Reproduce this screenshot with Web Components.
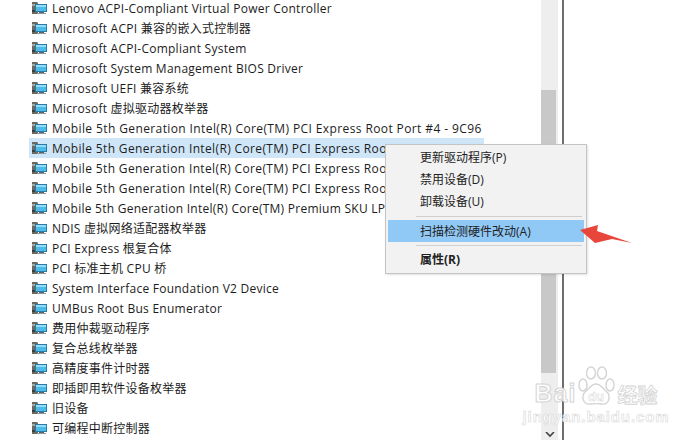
<!DOCTYPE html>
<html><head><meta charset="utf-8">
<style>
html,body{margin:0;padding:0;background:#fff;overflow:hidden}
body{width:696px;height:440px;font-family:"Open Sans","Noto Sans CJK SC",sans-serif;font-size:12px;color:#1c1c1c}
</style></head><body>
<template id="t-row"><style>
:host{display:flex;align-items:center;height:20px;padding-left:31px;gap:5px;white-space:nowrap}
:host([selected]){background:linear-gradient(#cfe6f8,#cfe6f8) no-repeat 29px 0/455px 20px}
svg{flex:none;width:16px;height:14px}
span{letter-spacing:.25px}
:host([wide]) span{letter-spacing:.39px}
:host([cut]) span{letter-spacing:.36px;max-width:333px;overflow:hidden}
:host([tight]) span{letter-spacing:.26px}
</style>
<svg viewBox="0 0 16 14"><path d="M1 1h5l1 1v11H1z" fill="#6b6a62"/><path d="M1 3h3v2H1z" fill="#a9a79b"/><path d="M1 9h3v2H1z" fill="#3e3d38"/><rect x="4" y="3" width="12" height="8" fill="#2a7ca6"/><rect x="5" y="4" width="10" height="6" fill="#4dbcea"/><path d="M5 4h10v2H5z" fill="#93dcf5"/><rect x="8" y="11" width="5" height="1" fill="#55646c"/><rect x="6" y="12" width="9" height="1" fill="#8d9aa0"/></svg><span><slot></slot></span></template>

<template id="t-list"><style>
:host{display:block;width:541px;margin-top:-2px;flex:none}
</style><slot></slot></template>

<template id="t-scroll"><style>
:host{display:flex;flex:none;width:23px;height:440px}
.track{width:17px;background:#eeeeee;display:flex;flex-direction:column;padding-top:90px;box-sizing:border-box}
.thumb{height:283px;width:15px;background:#c8c8c8}
.sp{flex:1}
.ar{height:8px;display:flex;justify-content:center}
.gap{width:4px;background:#fff}
.line{width:2px;background:#6e6e6e}
</style><div class="track"><div class="thumb"></div><div class="sp"></div><div class="ar"><svg width="10" height="6" viewBox="0 0 10 6"><path d="M1 0l4 4 4-4" fill="none" stroke="#444" stroke-width="1.6"/></svg></div></div><div class="gap"></div><div class="line"></div></template>

<template id="t-menu"><style>
:host{position:absolute;left:385px;top:144px;width:202px;height:130px;box-sizing:border-box;background:#f2f2f2;border:1px solid #c4c4c4;box-shadow:1px 1px 2px rgba(0,0,0,.12);padding:1px 2px;font-size:12px;color:#222;display:flex;flex-direction:column}
</style><slot></slot></template>

<template id="t-item"><style>
:host{display:flex;align-items:center;height:22px;padding-left:32px;white-space:nowrap}
:host([active]){background:#90c8f6}
:host([strong]){font-weight:700}
</style><slot></slot></template>

<template id="t-sep"><style>
:host{display:block;height:1px;margin:4px 2px 3px 28px;background:#cfcfcf}
:host([low]){margin:3px 2px 2px 28px}
</style></template>

<template id="t-arrow"><style>
:host{position:absolute;left:578px;top:224px;width:56px;height:22px;display:block}
</style><svg width="56" height="22" viewBox="0 0 56 22"><path d="M2 6L20 1l-1 6L54 19 34 15l-17 4z" fill="#e8463a"/></svg></template>

<template id="t-mark"><style>
:host{position:absolute;left:532px;top:364px;width:128px;height:62px;display:block;font-family:"Liberation Sans",sans-serif;pointer-events:none}
.c{display:flex;flex-direction:column;align-items:center}
.top{display:flex;align-items:flex-end;height:43px;white-space:nowrap}
.b{font-size:25px;font-weight:700;letter-spacing:1px;-webkit-text-stroke:1px #d4d4d4;color:rgba(255,255,255,.85);line-height:27px}
.paw{width:38px;height:41px;margin:0 1px;flex:none}
.cn{font:700 20px/25px "Noto Sans CJK SC",sans-serif;-webkit-text-stroke:.8px #d4d4d4;color:rgba(255,255,255,.85);margin-left:1px}
.u{font-size:15px;letter-spacing:.9px;font-weight:700;-webkit-text-stroke:.6px #d8d8d8;color:rgba(255,255,255,.85);line-height:16px;margin-top:2px;white-space:nowrap}
</style><div class="c"><div class="top"><span class="b">Bai</span><svg class="paw" viewBox="0 0 38 41" fill="rgba(255,255,255,.85)" stroke="#d4d4d4" stroke-width="1.4"><ellipse cx="6" cy="19" rx="4" ry="6"/><ellipse cx="14" cy="7" rx="4.5" ry="6"/><ellipse cx="25" cy="7" rx="4.5" ry="6"/><ellipse cx="33" cy="19" rx="4" ry="6"/><path d="M19 18c5 0 7 5 11 8 4 4 2 13-5 12-4-.5-8-.5-12 0-7 1-9-8-5-12 4-3 6-8 11-8z"/><text x="19" y="35" text-anchor="middle" font-size="13" font-weight="700" font-family="Liberation Sans" stroke-width=".5">du</text></svg><span class="cn">经验</span></div><div class="u">jingyan.baidu.com</div></div></template>

<dm-page>
<dm-list>
<dm-row>Lenovo ACPI-Compliant Virtual Power Controller</dm-row>
<dm-row>Microsoft ACPI 兼容的嵌入式控制器</dm-row>
<dm-row>Microsoft ACPI-Compliant System</dm-row>
<dm-row>Microsoft System Management BIOS Driver</dm-row>
<dm-row>Microsoft UEFI 兼容系统</dm-row>
<dm-row>Microsoft 虚拟驱动器枚举器</dm-row>
<dm-row wide>Mobile 5th Generation Intel(R) Core(TM) PCI Express Root Port #4 - 9C96</dm-row>
<dm-row selected cut>Mobile 5th Generation Intel(R) Core(TM) PCI Express Roo</dm-row>
<dm-row cut>Mobile 5th Generation Intel(R) Core(TM) PCI Express Roo</dm-row>
<dm-row cut>Mobile 5th Generation Intel(R) Core(TM) PCI Express Roo</dm-row>
<dm-row cut tight>Mobile 5th Generation Intel(R) Core(TM) Premium SKU LP</dm-row>
<dm-row>NDIS 虚拟网络适配器枚举器</dm-row>
<dm-row>PCI Express 根复合体</dm-row>
<dm-row>PCI 标准主机 CPU 桥</dm-row>
<dm-row>System Interface Foundation V2 Device</dm-row>
<dm-row>UMBus Root Bus Enumerator</dm-row>
<dm-row>费用仲裁驱动程序</dm-row>
<dm-row>复合总线枚举器</dm-row>
<dm-row>高精度事件计时器</dm-row>
<dm-row>即插即用软件设备枚举器</dm-row>
<dm-row>旧设备</dm-row>
<dm-row>可编程中断控制器</dm-row>
</dm-list>
<dm-scroll></dm-scroll>
</dm-page>
<dm-menu>
<dm-item>更新驱动程序(P)</dm-item>
<dm-item>禁用设备(D)</dm-item>
<dm-item>卸载设备(U)</dm-item>
<dm-sep></dm-sep>
<dm-item active>扫描检测硬件改动(A)</dm-item>
<dm-sep low></dm-sep>
<dm-item strong>属性(R)</dm-item>
</dm-menu>
<dm-arrow></dm-arrow>
<dm-mark></dm-mark>
<script>
const def=(n,t)=>customElements.define(n,class extends HTMLElement{constructor(){super();this.attachShadow({mode:"open"}).appendChild(document.getElementById(t).content.cloneNode(true))}});
customElements.define("dm-page",class extends HTMLElement{constructor(){super();this.attachShadow({mode:"open"}).innerHTML="<style>:host{display:flex;height:440px;overflow:hidden}</style><slot></slot>"}});
def("dm-row","t-row");def("dm-list","t-list");def("dm-scroll","t-scroll");def("dm-menu","t-menu");def("dm-item","t-item");def("dm-sep","t-sep");def("dm-arrow","t-arrow");def("dm-mark","t-mark");
</script>
</body></html>
